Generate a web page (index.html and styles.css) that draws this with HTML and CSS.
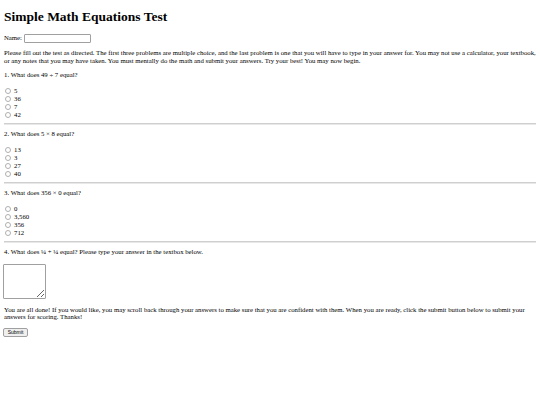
FILE: index.html
```html
<!DOCTYPE html>
<html>
<head>
<meta charset="utf-8">
<title>Simple Math Equations Test</title>
<link rel="stylesheet" href="styles.css">
</head>
<body>
<h1 class="title">Simple Math Equations Test</h1>
<div class="name-row">Name: <input class="name-input" type="text"></div>
<p class="intro">Please fill out the test as directed. The first three problems are multiple choice, and the last problem is one that you will have to type in your answer for. You may not use a calculator, your textbook, or any notes that you may have taken. You must mentally do the math and submit your answers. Try your best! You may now begin.</p>

<p class="question">1. What does 49 ÷ 7 equal?</p>
<div class="options">
  <label class="option"><input class="radio" type="radio" name="q1"> 5</label>
  <label class="option"><input class="radio" type="radio" name="q1"> 36</label>
  <label class="option"><input class="radio" type="radio" name="q1"> 7</label>
  <label class="option"><input class="radio" type="radio" name="q1"> 42</label>
</div>
<hr class="rule">

<p class="question">2. What does 5 × 8 equal?</p>
<div class="options">
  <label class="option"><input class="radio" type="radio" name="q2"> 13</label>
  <label class="option"><input class="radio" type="radio" name="q2"> 3</label>
  <label class="option"><input class="radio" type="radio" name="q2"> 27</label>
  <label class="option"><input class="radio" type="radio" name="q2"> 40</label>
</div>
<hr class="rule">

<p class="question">3. What does 356 × 0 equal?</p>
<div class="options">
  <label class="option"><input class="radio" type="radio" name="q3"> 0</label>
  <label class="option"><input class="radio" type="radio" name="q3"> 3,560</label>
  <label class="option"><input class="radio" type="radio" name="q3"> 356</label>
  <label class="option"><input class="radio" type="radio" name="q3"> 712</label>
</div>
<hr class="rule">

<p class="question">4. What does ¼ + ¼ equal? Please type your answer in the textbox below.</p>
<div class="answer-row"><textarea class="answer"></textarea></div>

<p class="outro">You are all done! If you would like, you may scroll back through your answers to make sure that you are confident with them. When you are ready, click the submit button below to submit your answers for scoring. Thanks!</p>
<button class="submit" type="button">Submit</button>
</body>
</html>
```

FILE: styles.css
```css
html, body {
  background: #ffffff;
}
body {
  margin: 0;
  padding: 8px 4px 4px;
  font-family: "Liberation Serif", "Times New Roman", serif;
  font-size: 6.75px;
  line-height: 7.5px;
  color: #000000;
}
.title {
  margin: 0 0 8px;
  font-size: 13.5px;
  line-height: 17px;
  font-weight: bold;
}
.name-row {
  display: flex;
  align-items: center;
  gap: 2px;
  height: 10px;
}
.name-input {
  box-sizing: border-box;
  width: 67px;
  height: 9px;
  margin: 0;
  padding: 0;
  border: 1px solid #a0a0a0;
  border-radius: 1px;
  background: #fff;
}
.intro {
  margin: 6px 0 7px;
}
.question {
  margin: 5px 0 8px;
  line-height: 8px;
}
.options {
  display: flex;
  flex-direction: column;
}
.option {
  display: flex;
  align-items: center;
  gap: 3px;
  height: 8px;
  line-height: 8px;
}
.radio {
  appearance: none;
  -webkit-appearance: none;
  box-sizing: border-box;
  width: 6px;
  height: 6px;
  margin: 0 0 0 1px;
  border: 1px solid #b0b0b0;
  border-radius: 50%;
  background: #fff;
}
.rule {
  margin: 4px 0 0;
  height: 0;
  border: 0;
  border-top: 1px solid #cfcfcf;
  border-bottom: 1px solid #e8e8e8;
}
.answer-row {
  display: flex;
  margin-left: -1px;
}
.answer {
  box-sizing: border-box;
  width: 43px;
  height: 35px;
  margin: 0;
  padding: 0;
  border: 1px solid #a0a0a0;
  border-radius: 1px;
  resize: both;
  background: #fff;
}
.outro {
  margin: 7px 0 8px;
  line-height: 7px;
}
.submit {
  display: block;
  box-sizing: border-box;
  margin: 0 0 0 -1px;
  width: 25px;
  height: 9px;
  padding: 0;
  font-family: "Liberation Sans", Arial, sans-serif;
  font-size: 5px;
  line-height: 7px;
  color: #000;
  background: #efefef;
  border: 1px solid #a0a0a0;
  border-radius: 2px;
}
```
